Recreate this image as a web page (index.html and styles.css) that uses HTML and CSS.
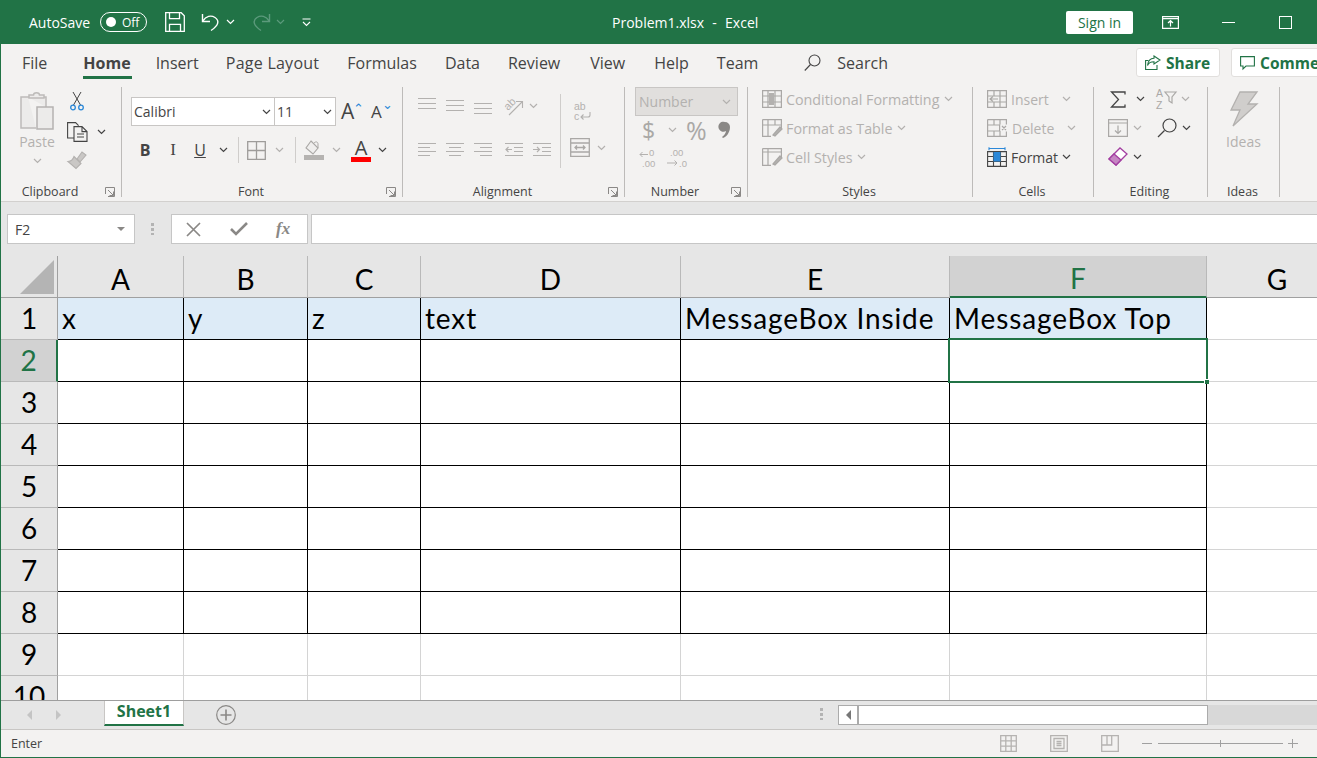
FILE: index.html
```html
<!DOCTYPE html>
<html lang="en">
<head>
<meta charset="utf-8">
<title>Problem1.xlsx - Excel</title>
<link rel="stylesheet" href="styles.css">
</head>
<body>
<svg class="defs" width="0" height="0" aria-hidden="true">
  <symbol id="chev" viewBox="0 0 9 6"><path d="M1 1l3.5 3.5L8 1" fill="none" stroke="currentColor" stroke-width="1.2"/></symbol>
  <symbol id="launch" viewBox="0 0 10 10"><path d="M.5 7V.5H9.5V9.5H3M3 3l5.5 5.5M8.5 4.500v4h-4" fill="none" stroke="currentColor" stroke-width="1"/></symbol>
  <symbol id="lines" viewBox="0 0 18 18"><path d="M0 3.5h18M0 8.5h18M0 13.5h18" fill="none" stroke="currentColor" stroke-width="1"/></symbol>
  <symbol id="left" viewBox="0 0 18 18"><path d="M0 2.5h18M0 6.5h12M0 10.5h18M0 14.5h12" fill="none" stroke="currentColor" stroke-width="1.2"/></symbol>
  <symbol id="mid" viewBox="0 0 18 18"><path d="M0 2.5h18M3 6.5h12M0 10.5h18M3 14.5h12" fill="none" stroke="currentColor" stroke-width="1.2"/></symbol>
  <symbol id="right" viewBox="0 0 18 18"><path d="M0 2.5h18M6 6.5h12M0 10.5h18M6 14.5h12" fill="none" stroke="currentColor" stroke-width="1.2"/></symbol>
</svg>
<div class="app">
  <header class="titlebar">
    <div class="qat">
      <span class="autosave">AutoSave</span>
      <span class="toggle"><i class="knob"></i><span>Off</span></span>
      <svg class="i-save" width="20" height="20" viewBox="0 0 20 20" fill="none" stroke="#fff" stroke-width="1.3"><path d="M.7.7h15.5l3.1 3.1v15.5H.7z"/><path d="M4.5.7v6h10v-6M4.5 19.3v-7h11v7"/></svg>
      <svg class="i-undo" width="20" height="20" viewBox="0 0 20 20" fill="none" stroke="#fff" stroke-width="1.4"><path d="M1.5 2v7.5H9"/><path d="M1.8 9C5 4 10 3 14 5.5c4.5 3 4 7.5-4 13"/></svg>
      <svg class="chev c-white ml5" width="9" height="6"><use href="#chev"/></svg>
      <svg class="i-redo" width="20" height="20" viewBox="0 0 20 20" fill="none" stroke="#5c9a7c" stroke-width="1.4"><path d="M18.5 2v7.5H11"/><path d="M18.2 9C15 4 10 3 6 5.5c-4.5 3-4 7.500 4 13"/></svg>
      <svg class="chev c-dim ml5" width="9" height="6"><use href="#chev"/></svg>
      <svg class="i-cust" width="9" height="9" viewBox="0 0 9 9" fill="none" stroke="#fff" stroke-width="1.1"><path d="M.5 1h8M1 4l3.500 3.500L8 4"/></svg>
    </div>
    <div class="doc-title">Problem1.xlsx&nbsp; - &nbsp;Excel</div>
    <div class="win">
      <button class="signin">Sign in</button>
      <svg class="i-disp" width="17" height="13" viewBox="0 0 17 13" fill="none" stroke="#fff" stroke-width="1.2"><path d="M.6.6h15.800v11.800H.6zM.6 2.600h15.800M8.500 10.500V5M6 7l2.500-2.500L11 7"/></svg>
      <i class="i-min"></i>
      <i class="i-max"></i>
    </div>
  </header>

  <nav class="tabs">
    <div class="tablist">
      <span class="tab t-file">File</span>
      <span class="tab active">Home</span>
      <span class="tab">Insert</span>
      <span class="tab t-page">Page Layout</span>
      <span class="tab">Formulas</span>
      <span class="tab">Data</span>
      <span class="tab">Review</span>
      <span class="tab t-view">View</span>
      <span class="tab t-help">Help</span>
      <span class="tab">Team</span>
      <svg class="i-search" width="17" height="18" viewBox="0 0 17 18" fill="none" stroke="#444" stroke-width="1.1"><circle cx="10.500" cy="6.500" r="5.500"/><path d="M6.500 10.500L.8 16.500"/></svg>
      <span class="tab t-search">Search</span>
    </div>
    <div class="tab-actions">
      <button class="pill pill-share"><svg width="16" height="15" viewBox="0 0 16 15" fill="none" stroke="#217346" stroke-width="1.1"><path d="M9 1l6 4-6 4V6.800C5.500 6.800 3.500 8 2.500 10.500 3 6 5 3.500 9 3.300z"/><path d="M3.500 5.500H.6v9H12V10"/></svg><span>Share</span></button>
      <button class="pill pill-comm"><svg width="15" height="14" viewBox="0 0 15 14" fill="none" stroke="#217346" stroke-width="1.1"><path d="M.6.6h13.800v9.400H6l-3 3v-3H.6z"/></svg><span>Comments</span></button>
    </div>
  </nav>

  <section class="ribbon">
    <div class="group g-clip">
      <div class="gbody clipbody">
        <div class="pastecol">
          <svg width="34" height="38" viewBox="0 0 34 38" fill="none" stroke="#bdbbb9" stroke-width="1.500"><path d="M8 5H1v31h15" fill="#ecebea"/><path d="M8 5h18v10" fill="#ecebea"/><path d="M9 6V3h4.500c0-3 6-3 6 0H24v3z" fill="#ecebea"/><path d="M17 15h16v22H17z" fill="#ecebea" stroke="#b5b3b1"/></svg>
          <span class="pastelabel">Paste</span>
          <svg class="chev c-light" width="9" height="6"><use href="#chev"/></svg>
        </div>
        <div class="clipcol">
          <svg class="i-sciss" width="14" height="19" viewBox="0 0 14 19" fill="none"><path d="M3 0l7.500 13M11 0L3.500 13" stroke="#444" stroke-width="1"/><circle cx="3" cy="15.500" r="2.300" stroke="#2b88d8" stroke-width="1.300"/><circle cx="11" cy="15.500" r="2.300" stroke="#2b88d8" stroke-width="1.300"/></svg>
          <div class="rowi i-copyrow">
            <svg width="21" height="20" viewBox="0 0 21 20" fill="none" stroke="#444" stroke-width="1.100"><path d="M7 16H.6V.6h8l3 3"/><path d="M7 4.600h8l5 5v9.800H7zM15 4.600v5h5M10 12h7M10 15h7"/></svg>
            <svg class="chev ml9" width="9" height="6"><use href="#chev"/></svg>
          </div>
          <svg class="i-brush" width="20" height="18" viewBox="0 0 20 18" fill="#c9c7c5" stroke="#b3b1af" stroke-width="1.100"><path d="M10 8l5-7 4 3-6 7z"/><path d="M7 5.500l7 7-5 5-8-7c3 0 5-2 6-5z"/></svg>
        </div>
      </div>
      <div class="glabel"><span>Clipboard</span><svg class="launch" width="10" height="10"><use href="#launch"/></svg></div>
    </div>

    <div class="group g-font">
      <div class="gbody fontbody">
        <div class="rowi f-row1">
          <div class="combo c-name"><span>Calibri</span><svg class="chev" width="9" height="6"><use href="#chev"/></svg></div>
          <div class="combo c-size"><span>11</span><svg class="chev" width="9" height="6"><use href="#chev"/></svg></div>
          <span class="growA">A<sup>⌃</sup></span>
          <span class="growA shrinkA">A<sup>⌄</sup></span>
        </div>
        <div class="rowi f-row2">
          <b class="fmt f-b">B</b>
          <i class="fmt f-i">I</i>
          <u class="fmt f-u">U</u>
          <svg class="chev ml13" width="9" height="6"><use href="#chev"/></svg>
          <i class="vsep vs-1"></i>
          <svg class="i-border" width="19" height="19" viewBox="0 0 19 19" fill="none" stroke="#9e9c9a" stroke-width="1.300"><path d="M.7.7h17.600v17.600H.7zM9.500.7v17.600M.7 9.500h17.600"/></svg>
          <svg class="chev c-light ml9" width="9" height="6"><use href="#chev"/></svg>
          <i class="vsep vs-2"></i>
          <svg class="i-fill" width="20" height="20" viewBox="0 0 20 20"><path d="M7 1l7 7-5 6-7-6z" fill="#efeeed" stroke="#a9a7a5" stroke-width="1.100"/><path d="M10 3c2-2 4-1 4 1v4" fill="none" stroke="#a9a7a5"/><rect y="15" width="20" height="5" fill="#b5b3b1"/></svg>
          <svg class="chev c-light ml8" width="9" height="6"><use href="#chev"/></svg>
          <span class="fontA">A<i class="redbar"></i></span>
          <svg class="chev ml7" width="9" height="6"><use href="#chev"/></svg>
        </div>
      </div>
      <div class="glabel"><span>Font</span><svg class="launch" width="10" height="10"><use href="#launch"/></svg></div>
    </div>

    <div class="group g-align">
      <div class="gbody alignbody">
        <div class="aligncol">
          <div class="rowi a-row">
            <svg class="ic18 up4" width="18" height="18"><use href="#lines"/></svg>
            <svg class="ic18" width="18" height="18"><use href="#lines"/></svg>
            <svg class="ic18 dn3" width="18" height="18"><use href="#lines"/></svg>
            <svg class="i-orient" width="20" height="20" viewBox="0 0 20 20"><text class="orient-txt" x="1" y="12" transform="rotate(-45 6 10)">ab</text><path d="M5 19L18 6M12 5.500h6.500V12" fill="none" stroke="#b3b1af" stroke-width="1.100"/></svg>
            <svg class="chev c-light ml5" width="9" height="6"><use href="#chev"/></svg>
          </div>
          <div class="rowi a-row a-row2">
            <svg class="ic18" width="18" height="18"><use href="#left"/></svg>
            <svg class="ic18" width="18" height="18"><use href="#mid"/></svg>
            <svg class="ic18" width="18" height="18"><use href="#right"/></svg>
            <svg class="ic18 ml3" width="18" height="18" viewBox="0 0 18 18" fill="none" stroke="#b3b1af" stroke-width="1.200"><path d="M0 2.500h18M9 6.500h9M9 10.500h9M0 14.500h18M7 8.500H1M3.500 6L1 8.500 3.500 11"/></svg>
            <svg class="ic18" width="18" height="18" viewBox="0 0 18 18" fill="none" stroke="#b3b1af" stroke-width="1.200"><path d="M0 2.500h18M9 6.500h9M9 10.500h9M0 14.500h18M0 8.500h6M4 6l2.500 2.500L4 11"/></svg>
          </div>
        </div>
        <div class="wrapcol">
          <svg class="i-wrap" width="18" height="19" viewBox="0 0 18 19"><text class="wrap-txt" x="1" y="8">ab</text><text class="wrap-txt" x="1" y="18">c</text><path d="M17 10v3a2 2 0 0 1-2 2H8M10.500 12.500L8 15l2.500 2.500" fill="none" stroke="#b3b1af" stroke-width="1.100"/></svg>
          <div class="rowi merge-row">
            <svg width="20" height="19" viewBox="0 0 20 19" fill="none" stroke="#aaa8a6" stroke-width="1.300"><path d="M.7.700h18.600v17.600H.7zM.7 5h18.600M.7 14h18.600M5 9.500h10M7 7.500l-2 2 2 2M13 7.500l2 2-2 2"/></svg>
            <svg class="chev c-light ml7" width="9" height="6"><use href="#chev"/></svg>
          </div>
        </div>
      </div>
      <div class="glabel"><span>Alignment</span><svg class="launch" width="10" height="10"><use href="#launch"/></svg></div>
    </div>

    <div class="group g-num">
      <div class="gbody numbody">
        <div class="combo numcombo"><span>Number</span><svg class="chev c-light" width="9" height="6"><use href="#chev"/></svg></div>
        <div class="rowi num-row">
          <span class="sym s-dollar">$</span>
          <svg class="chev c-light ml12" width="9" height="6"><use href="#chev"/></svg>
          <span class="sym s-pct">%</span>
          <svg class="i-comma" width="10" height="16" viewBox="0 0 10 16"><path d="M5 0a5 5 0 0 1 5 5c0 6-4 10-7 11l-1-1c2-1.500 4-4 4-6a5 5 0 1 1-1-9z" fill="#8a8886"/></svg>
        </div>
        <div class="rowi num-row2">
          <svg width="21" height="20" viewBox="0 0 21 20"><text class="dec" x="10" y="8">0</text><text class="dec" x="3" y="19">.00</text><path d="M1 6.500h8M3.500 4L1 6.500 3.500 9" fill="none" stroke="#b3b1af" stroke-width="1"/></svg>
          <svg class="ml7" width="21" height="20" viewBox="0 0 21 20"><text class="dec" x="3" y="8">.00</text><text class="dec" x="12" y="19">.0</text><path d="M0 15h10M7.500 12.500L10 15l-2.500 2.500" fill="none" stroke="#b3b1af" stroke-width="1"/></svg>
        </div>
      </div>
      <div class="glabel"><span>Number</span><svg class="launch" width="10" height="10"><use href="#launch"/></svg></div>
    </div>

    <div class="group g-styles">
      <div class="gbody stackbody">
        <div class="rowi stk">
          <svg class="ic20" width="20" height="18" viewBox="0 0 20 18" fill="none" stroke="#aaa8a6" stroke-width="1.200"><path d="M.6.600h18.800v16.800H.6zM.6 6h18.800M.6 12h18.800M6 .6v16.800M13 .6v16.800"/><path d="M7 3h5v12H7z" fill="#b3b1af" stroke="none"/></svg>
          <span class="dim">Conditional Formatting</span>
          <svg class="chev c-light ml5" width="9" height="6"><use href="#chev"/></svg>
        </div>
        <div class="rowi stk">
          <svg class="ic20" width="20" height="18" viewBox="0 0 20 18" fill="none" stroke="#aaa8a6" stroke-width="1.200"><path d="M.6.600h18.800v9M9 17.400H.6V.6M.6 6h18.800M6 .6v16.800M13 .6v6"/><path d="M11 16l7-8 2 2-7 7z" fill="#b3b1af"/></svg>
          <span class="dim">Format as Table</span>
          <svg class="chev c-light ml4" width="9" height="6"><use href="#chev"/></svg>
        </div>
        <div class="rowi stk">
          <svg class="ic20" width="20" height="18" viewBox="0 0 20 18" fill="none" stroke="#aaa8a6" stroke-width="1.200"><path d="M.6.600h18.800v9M9 17.400H.6V.6M.6 4h18.800M6 .6v16.800"/><path d="M11 16l7-8 2 2-7 7z" fill="#b3b1af"/></svg>
          <span class="dim">Cell Styles</span>
          <svg class="chev c-light ml4" width="9" height="6"><use href="#chev"/></svg>
        </div>
      </div>
      <div class="glabel nolaunch"><span>Styles</span></div>
    </div>

    <div class="group g-cells">
      <div class="gbody stackbody">
        <div class="rowi stk">
          <svg class="ic20" width="20" height="18" viewBox="0 0 20 18" fill="none" stroke="#aaa8a6" stroke-width="1.200"><path d="M.6.600h18.800v16.800H.6zM.6 6h18.800M.6 12h18.800M7 .6v5M13 .6v16.800M7 12v5.400"/><path d="M11 9H3M6 6.500L3 9l3 2.500"/></svg>
          <span class="dim">Insert</span>
          <svg class="chev c-light ml13" width="9" height="6"><use href="#chev"/></svg>
        </div>
        <div class="rowi stk">
          <svg class="ic20" width="20" height="18" viewBox="0 0 20 18" fill="none" stroke="#aaa8a6" stroke-width="1.200"><path d="M.6.600h18.800v5M.6.600v16.800h18.800v-5M.6 6h12v6H.6M7 .6v5M13 .6v5M7 12v5.400M13 12v5.400M15 7l4 4M19 7l-4 4"/></svg>
          <span class="dim dim-del">Delete</span>
          <svg class="chev c-light ml13" width="9" height="6"><use href="#chev"/></svg>
        </div>
        <div class="rowi stk">
          <svg class="ic20" width="20" height="20" viewBox="0 0 20 20" fill="none" stroke="#444" stroke-width="1.100"><path d="M.6 4.600h18.800v14.800H.6zM.6 9.500h18.800M.6 14.500h18.800M6.500 4.600v14.800M13.500 4.600v14.800"/><path d="M6.500 5h7v9.500h-7z" fill="#2b88d8" stroke="none"/><path d="M2 1.500h16M2 .2v3M18 .2v3" stroke="#2b88d8"/></svg>
          <span class="dark">Format</span>
          <svg class="chev ml4" width="9" height="6"><use href="#chev"/></svg>
        </div>
      </div>
      <div class="glabel nolaunch"><span>Cells</span></div>
    </div>

    <div class="group g-edit">
      <div class="gbody stackbody">
        <div class="rowi stk">
          <svg class="i-sigma" width="16" height="17" viewBox="0 0 16 17" fill="none" stroke="#444" stroke-width="1.300"><path d="M15 3.500V1H1.500l7 7.500-7 7.500H15v-2.500"/></svg>
          <svg class="chev i-sigma-chev" width="9" height="6"><use href="#chev"/></svg>
          <svg class="i-sort" width="20" height="20" viewBox="0 0 20 20"><text class="sort-txt" x="0" y="8">A</text><text class="sort-txt" x="0" y="20">Z</text><path d="M9 3h11l-4 5v6l-3 -2V8z" fill="none" stroke="#aaa8a6" stroke-width="1.200"/></svg>
          <svg class="chev c-light ml5" width="9" height="6"><use href="#chev"/></svg>
        </div>
        <div class="rowi stk">
          <svg class="i-down" width="20" height="18" viewBox="0 0 20 18" fill="none" stroke="#aaa8a6" stroke-width="1.200"><path d="M.6.600h18.800v16.800H.6zM.6 4h18.800" /><path d="M10 6.500v8M7 11.500l3 3 3-3"/></svg>
          <svg class="chev c-light ml5" width="9" height="6"><use href="#chev"/></svg>
          <svg class="i-find" width="20" height="20" viewBox="0 0 20 20" fill="none" stroke="#444" stroke-width="1.200"><circle cx="12.500" cy="7.500" r="6.500"/><path d="M7.500 12.500L1 19"/></svg>
          <svg class="chev ml5" width="9" height="6"><use href="#chev"/></svg>
        </div>
        <div class="rowi stk">
          <svg class="i-down" width="20" height="20" viewBox="0 0 20 20"><path d="M1 12l11-11 7 6-11 11z" fill="#fff" stroke="#a33ea1" stroke-width="1.300"/><path d="M1 12l5-5 7 6-5 5z" fill="#c586c3" stroke="#a33ea1" stroke-width="1.300"/></svg>
          <svg class="chev ml5" width="9" height="6"><use href="#chev"/></svg>
        </div>
      </div>
      <div class="glabel nolaunch"><span>Editing</span></div>
    </div>

    <div class="group g-ideas">
      <div class="gbody ideabody">
        <svg width="28" height="36" viewBox="0 0 28 36"><path d="M10 1h17L18 13h9L3 35l7-16H1z" fill="#d0cecc" stroke="#b3b1af" stroke-width="1.300"/></svg>
        <span class="ideatxt">Ideas</span>
      </div>
      <div class="glabel nolaunch"><span>Ideas</span></div>
    </div>
  </section>

  <section class="fbar">
    <div class="namebox"><span>F2</span><i class="tri"></i></div>
    <i class="grip"></i>
    <div class="fbtns">
      <svg class="b-x" width="15" height="15" viewBox="0 0 15 15" fill="none" stroke="#8a8886" stroke-width="1.700"><path d="M1 1l13 13M14 1L1 14"/></svg>
      <svg class="b-ok" width="18" height="14" viewBox="0 0 18 14" fill="none" stroke="#8a8886" stroke-width="2.600"><path d="M1 7l5 5L17 1"/></svg>
      <span class="fx">fx</span>
    </div>
    <div class="finput"></div>
  </section>

  <main class="sheet">
    <div class="hd corner"><svg width="34" height="34" viewBox="0 0 34 34"><path d="M0 34L34 0v34z" fill="#b4b4b4"/></svg></div>
    <div class="hd">A</div><div class="hd">B</div><div class="hd">C</div><div class="hd">D</div><div class="hd">E</div><div class="hd hd-sel">F</div><div class="hd hd-last">G</div>

    <div class="rh">1</div><div class="cell hl">x</div><div class="cell hl">y</div><div class="cell hl">z</div><div class="cell hl">text</div><div class="cell hl">MessageBox Inside</div><div class="cell hl">MessageBox Top</div><div class="lite"></div>

    <div class="rh rh-sel">2</div><div class="cell"></div><div class="cell"></div><div class="cell"></div><div class="cell"></div><div class="cell"></div><div class="cell active-cell"><i class="sel"><i class="handle"></i></i></div><div class="lite"></div>

    <div class="rh">3</div><div class="cell"></div><div class="cell"></div><div class="cell"></div><div class="cell"></div><div class="cell"></div><div class="cell"></div><div class="lite"></div>
    <div class="rh">4</div><div class="cell"></div><div class="cell"></div><div class="cell"></div><div class="cell"></div><div class="cell"></div><div class="cell"></div><div class="lite"></div>
    <div class="rh">5</div><div class="cell"></div><div class="cell"></div><div class="cell"></div><div class="cell"></div><div class="cell"></div><div class="cell"></div><div class="lite"></div>
    <div class="rh">6</div><div class="cell"></div><div class="cell"></div><div class="cell"></div><div class="cell"></div><div class="cell"></div><div class="cell"></div><div class="lite"></div>
    <div class="rh">7</div><div class="cell"></div><div class="cell"></div><div class="cell"></div><div class="cell"></div><div class="cell"></div><div class="cell"></div><div class="lite"></div>
    <div class="rh">8</div><div class="cell"></div><div class="cell"></div><div class="cell"></div><div class="cell"></div><div class="cell"></div><div class="cell"></div><div class="lite"></div>

    <div class="rh">9</div><div class="lite"></div><div class="lite"></div><div class="lite"></div><div class="lite"></div><div class="lite"></div><div class="lite"></div><div class="lite"></div>
    <div class="rh">10</div><div class="lite"></div><div class="lite"></div><div class="lite"></div><div class="lite"></div><div class="lite"></div><div class="lite"></div><div class="lite"></div>
  </main>

  <section class="sheetbar">
    <i class="nav nav-l"></i>
    <i class="nav nav-r"></i>
    <div class="sheettab">Sheet1</div>
    <svg class="i-add" width="20" height="20" viewBox="0 0 20 20" fill="none" stroke="#8a8886" stroke-width="1.200"><circle cx="10" cy="10" r="9.300"/><path d="M10 4.500v11M4.500 10h11" stroke-width="1.600"/></svg>
    <i class="grip grip-h"></i>
    <div class="hscroll"><span class="sbtn"><i class="sleft"></i></span><span class="sthumb"></span></div>
  </section>

  <footer class="status">
    <span class="mode">Enter</span>
    <div class="views">
      <svg width="17" height="17" viewBox="0 0 17 17" fill="none" stroke="#b5b3b1" stroke-width="1.300"><path d="M.7.700h15.600v15.600H.7zM5.800.7v15.600M11.200.7v15.600M.7 5.800h15.600M.7 11.200h15.600"/></svg>
      <svg width="18" height="17" viewBox="0 0 18 17" fill="none" stroke="#b5b3b1" stroke-width="1.300"><path d="M.7.700h16.600v15.600H.7zM4 3.500h10v10H4zM6.500 6.500h5M6.500 8.500h5M6.500 10.500h5"/></svg>
      <svg width="18" height="17" viewBox="0 0 18 17" fill="none" stroke="#b5b3b1" stroke-width="1.300"><path d="M.7.700h16.600v15.600H.7zM.7 10h10V.7M6 .7V10"/></svg>
    </div>
    <div class="zoom">
      <i class="z-minus"></i>
      <div class="z-track"><i class="z-tick"></i></div>
      <i class="z-plus"></i>
    </div>
  </footer>
</div>
</body>
</html>
```

FILE: styles.css
```css
* { box-sizing: border-box; }
html, body { margin: 0; padding: 0; height: 100%; overflow: hidden; background: #fff; }
body { font-family: "Open Sans", "Noto Sans", sans-serif; color: #444; }
.defs { position: absolute; }
i { display: block; font-style: normal; }
svg { display: block; flex: none; overflow: visible; }
svg text { font-family: "Liberation Sans", sans-serif; }
button { font: inherit; border: 0; padding: 0; }

.app { width: 1317px; height: 758px; display: flex; flex-direction: column; border-left: 1px solid #217346; border-bottom: 1px solid #217346; overflow: hidden; }

/* utilities */
.rowi { display: flex; align-items: center; }
.chev { color: #444; }
.c-white { color: #fff; }
.c-dim { color: #5c9a7c; }
.c-light { color: #b3b1af; }
.ml3 { margin-left: 3px; }
.ml4 { margin-left: 4px; }
.ml5 { margin-left: 5px; }
.ml7 { margin-left: 7px; }
.ml8 { margin-left: 8px; }
.ml9 { margin-left: 9px; }
.ml12 { margin-left: 12px; }
.ml13 { margin-left: 13px; }

/* title bar */
.titlebar { height: 44px; flex: none; background: #217346; color: #fff; display: flex; align-items: center; margin-left: -1px; padding-left: 29px; }
.qat { display: flex; align-items: center; width: 283px; flex: none; }
.autosave { font-size: 14px; width: 71px; }
.toggle { width: 47px; height: 20px; border: 1px solid #fff; border-radius: 10px; display: flex; align-items: center; font-size: 12px; padding-left: 5px; gap: 6px; }
.knob { width: 10px; height: 10px; background: #fff; border-radius: 50%; }
.i-save { margin-left: 18px; }
.i-undo { margin-left: 16px; }
.i-redo { margin-left: 16px; }
.i-cust { margin-left: 17px; }
.doc-title { margin-left: 300px; font-size: 14px; white-space: nowrap; width: 147px; word-spacing: .5px; }
.win { margin-left: auto; padding-right: 25px; display: flex; align-items: center; }
.signin { width: 67px; height: 23px; background: #fff; color: #217346; font-size: 14px; border-radius: 2px; }
.i-disp { margin-left: 29px; }
.i-min { margin-left: 43px; width: 13px; height: 1px; background: #fff; }
.i-max { margin-left: 44px; width: 13px; height: 13px; border: 1px solid #fff; }

/* tabs */
.tabs { height: 40px; flex: none; background: #f3f2f1; display: flex; }
.tablist { flex: 1; min-width: 0; display: flex; align-items: center; gap: 28px; padding-left: 21px; padding-bottom: 2px; font-size: 16px; }
.tab { position: relative; white-space: nowrap; color: #444; }
.t-file { margin-right: 8px; }
.t-page { margin-left: -1px; letter-spacing: .25px; }
.t-view { margin-left: 2px; }
.t-help { margin-left: 1px; }
.tab.active { font-weight: 700; margin-right: -3px; }
.tab.active::after { content: ""; position: absolute; left: 0; right: -1px; bottom: -5px; height: 3px; background: #217346; }
.i-search { margin-left: 18px; }
.t-search { margin-left: -12px; }
.tab-actions { flex: 0 0 181px; display: flex; gap: 11px; padding-top: 4px; overflow: hidden; }
.pill { flex: none; height: 29px; background: #fff; border: 1px solid #e1dfdd; border-radius: 3px; display: flex; align-items: center; gap: 5px; padding-left: 8px; color: #217346; font-weight: 700; font-size: 15.500px; }
.pill-share { width: 84px; }
.pill-comm { width: 118px; }

/* ribbon */
.ribbon { height: 118px; flex: none; background: #f3f2f1; border-bottom: 1px solid #d2d0ce; padding-top: 3px; display: flex; }
.group { height: 110px; border-right: 1px solid #bdbbb9; display: flex; flex-direction: column; flex: none; }
.g-clip { width: 121px; }
.g-font { width: 281px; }
.g-align { width: 222px; }
.g-num { width: 123px; }
.g-styles { width: 225px; }
.g-cells { width: 121px; }
.g-edit { width: 114px; }
.g-ideas { width: 72px; }
.gbody { flex: 1; min-height: 0; }
.glabel { height: 15px; flex: none; display: flex; align-items: center; font-size: 12.500px; color: #444; margin-bottom: -2px; }
.glabel span { flex: 1; text-align: center; }
.launch { color: #8a8886; margin: 0 6px 0 6px; }
.nolaunch span { padding-right: 2px; }

/* clipboard */
.clipbody { display: flex; }
.pastecol { width: 66px; display: flex; flex-direction: column; align-items: center; padding: 5px 0 0 6px; }
.pastelabel { font-size: 14px; color: #b3b1af; margin-top: 2px; }
.pastecol .chev { margin-top: 7px; }
.clipcol { display: flex; flex-direction: column; padding-left: 0; }
.i-sciss { margin: 5px 0 0 3px; }
.i-copyrow { margin-top: 11px; }
.i-brush { margin-top: 9px; }

/* font */
.fontbody { padding: 10px 0 0 9px; }
.f-row1 { height: 29px; }
.combo { height: 29px; background: #fff; border: 1px solid #c8c6c4; display: flex; align-items: center; justify-content: space-between; padding: 0 3px 0 2px; font-size: 14px; color: #444; }
.c-name { width: 144px; }
.c-size { width: 62px; margin-left: -1px; }
.growA { font-size: 21px; color: #444; margin-left: 5px; position: relative; width: 30px; line-height: 1; }
.growA sup { position: absolute; left: 12px; top: 1px; font-size: 13px; color: #2b88d8; line-height: 1; }
.shrinkA { font-size: 17px; margin-left: 0; width: 20px; }
.shrinkA sup { left: 11px; top: -5px; }
.f-row2 { height: 24px; margin-top: 12px; }
.fmt { font-size: 16px; color: #444; width: 12px; text-align: center; }
.f-b { margin-left: 8px; }
.f-i { margin-left: 16px; font-family: "Liberation Serif", serif; font-size: 17px; }
.f-u { margin-left: 15px; }
.vsep { width: 1px; height: 26px; background: #cfcdcb; }
.vs-1 { margin-left: 10px; }
.i-border { margin-left: 8px; }
.vs-2 { margin-left: 11px; }
.i-fill { margin-left: 8px; }
.fontA { margin-left: 10px; width: 20px; height: 24px; position: relative; text-align: center; font-size: 20px; line-height: 20px; color: #444; }
.redbar { position: absolute; left: 0; right: 0; bottom: 0; height: 5px; background: #f00; }

/* alignment */
.alignbody { display: flex; padding: 7px 0 0 15px; }
.aligncol { width: 143px; height: 74px; border-right: 1px solid #cfcdcb; color: #b3b1af; }
.a-row { height: 24px; gap: 10px; color: #b3b1af; }
.a-row .ml5 { margin-left: -5px; }
.a-row2 { margin-top: 20px; }
.up4 { margin-top: -4px; }
.dn3 { margin-top: 5px; }
.i-orient { margin-left: 2px; }
.orient-txt { font-size: 11px; fill: #b3b1af; }
.wrapcol { display: flex; flex-direction: column; padding-left: 9px; }
.i-wrap { margin: 8px 0 0 3px; }
.wrap-txt { font-size: 10.500px; fill: #b3b1af; }
.merge-row { margin-top: 17px; }

/* number */
.numbody { padding-left: 10px; }
.numcombo { width: 103px; background: #e1dfdd; color: #b3b1af; padding: 0 6px 0 3px; }
.num-row { height: 24px; margin-top: 2px; }
.sym { color: #aaa8a6; line-height: 24px; }
.s-dollar { font-size: 23px; margin-left: 7px; width: 14px; }
.s-pct { font-size: 25px; margin-left: 9px; width: 25px; }
.i-comma { margin-left: 9px; }
.num-row2 { margin: 6px 0 0 4px; }
.dec { font-size: 9.500px; fill: #b3b1af; }

/* stacks */
.stackbody { display: flex; flex-direction: column; gap: 5px; }
.g-styles .stackbody { padding-left: 14px; }
.g-cells .stackbody { padding-left: 14px; }
.g-edit .stackbody { padding-left: 14px; }
.stk { height: 24px; font-size: 14px; }
.g-styles .stk { font-size: 14.300px; }
.dim { color: #b3b1af; margin-left: 4px; white-space: nowrap; }
.dim-del { margin-left: 5px; }
.dark { color: #444; margin-left: 4px; }
.i-sigma { margin-left: 2px; }
.i-sigma-chev { margin-left: 10px; }
.i-sort { margin-left: 11px; }
.sort-txt { font-size: 10.500px; fill: #aaa8a6; }
.i-find { margin-left: 15px; }

/* ideas */
.ideabody { display: flex; flex-direction: column; align-items: center; padding-top: 4px; }
.ideatxt { color: #b3b1af; font-size: 14px; margin-top: 5px; }

/* formula bar */
.fbar { height: 54px; flex: none; background: #e6e6e6; display: flex; align-items: flex-start; padding: 12px 0 0 6px; }
.namebox { width: 128px; height: 30px; background: #fff; border: 1px solid #c6c6c6; display: flex; align-items: center; justify-content: space-between; padding: 0 9px 0 7px; font-size: 14px; color: #444; }
.tri { border: 4px solid transparent; border-top-color: #8a8886; border-bottom: 0; }
.grip { width: 3px; height: 12px; margin: 9px 0 0 16px; background: repeating-linear-gradient(#b3b3b3 0 3px, transparent 3px 5px); }
.fbtns { width: 137px; height: 30px; margin-left: 17px; background: #fff; border: 1px solid #c6c6c6; display: flex; align-items: center; padding-left: 14px; }
.b-ok { margin-left: 29px; }
.fx { font-family: "Liberation Serif", serif; font-style: italic; font-weight: 700; font-size: 17px; color: #8a8886; margin-left: 28px; }
.finput { flex: 1; height: 30px; margin-left: 3px; background: #fff; border: 1px solid #c6c6c6; border-right: 0; }

/* sheet grid */
.sheet { height: 444px; flex: none; overflow: hidden; display: grid; grid-template-columns: 57px 126px 124px 113px 260px 269px 257px 140px; grid-auto-rows: 42px; font-family: Lato, "Noto Sans", sans-serif; font-size: 28px; color: #000; }
.hd { background: #e6e6e6; border-right: 1px solid #b9b9b9; border-bottom: 1px solid #a0a0a0; display: flex; align-items: center; justify-content: center; padding-top: 4px; }
.corner { justify-content: flex-end; align-items: flex-end; padding: 0 3px 3px 0; border-right-color: #a0a0a0; }
.hd-sel { background: #d2d2d2; color: #217346; border-bottom: 2px solid #217346; }
.hd-last { border-right: 0; }
.rh { background: #e6e6e6; border-right: 1px solid #a0a0a0; border-bottom: 1px solid #b9b9b9; display: flex; align-items: center; justify-content: center; padding-bottom: 2px; }
.rh-sel { background: #d2d2d2; color: #217346; border-right: 2px solid #217346; }
.cell { background: #fff; border-right: 1px solid #000; border-bottom: 1px solid #000; display: flex; align-items: center; padding: 0 0 2px 4px; white-space: nowrap; letter-spacing: .9px; }
.hl { background: #ddebf7; }
.lite { background: #fff; border-right: 1px solid #d4d4d4; border-bottom: 1px solid #d4d4d4; }
.active-cell { position: relative; }
.sel { position: absolute; left: -2px; top: -2px; right: -2px; bottom: -2px; border: 2px solid #217346; }
.handle { position: absolute; right: -3px; bottom: -3px; width: 5px; height: 5px; background: #217346; border: 1px solid #fff; border-width: 1px 0 0 1px; }

/* sheet tabs */
.sheetbar { height: 30px; flex: none; background: #e6e6e6; border-top: 1px solid #9e9e9e; border-bottom: 1px solid #c8c6c4; display: flex; align-items: flex-start; padding-left: 26px; }
.nav { width: 0; height: 0; margin-top: 9px; border: 5px solid transparent; }
.nav-l { border-right: 5px solid #c4c4c4; border-left: 0; }
.nav-r { border-left: 5px solid #c4c4c4; border-right: 0; margin-left: 24px; }
.sheettab { width: 80px; height: 25px; margin-left: 43px; background: #fff; border-bottom: 2px solid #217346; border-left: 1px solid #c8c6c4; border-right: 1px solid #c8c6c4; color: #217346; font-weight: 700; font-size: 16px; text-align: center; line-height: 21px; }
.i-add { margin: 4px 0 0 32px; }
.grip-h { margin: 7px 0 0 584px; }
.hscroll { margin: 4px 0 0 15px; flex: 1; height: 20px; background: #d8d8d8; display: flex; }
.sbtn { width: 20px; height: 20px; background: #fff; border: 1px solid #ababab; display: flex; align-items: center; justify-content: center; }
.sleft { border: 5px solid transparent; border-right: 5px solid #777; border-left: 0; }
.sthumb { width: 351px; height: 20px; background: #fff; border: 1px solid #ababab; border-left-width: 2px; margin-left: -1px; }

/* status bar */
.status { flex: 1; background: #f3f2f1; display: flex; align-items: center; padding-left: 10px; font-size: 12.500px; color: #444; }
.views { margin-left: 958px; display: flex; gap: 33px; }
.zoom { margin-left: 23px; display: flex; align-items: center; }
.z-minus { width: 10px; height: 1px; background: #a0a0a0; }
.z-track { position: relative; width: 125px; height: 1px; background: #a0a0a0; margin-left: 6px; }
.z-tick { position: absolute; left: 62px; top: -3px; width: 1px; height: 7px; background: #a0a0a0; }
.z-plus { position: relative; width: 10px; height: 1px; background: #a0a0a0; margin-left: 5px; }
.z-plus::after { content: ""; position: absolute; left: 4px; top: -4px; width: 1px; height: 9px; background: #a0a0a0; }
```
